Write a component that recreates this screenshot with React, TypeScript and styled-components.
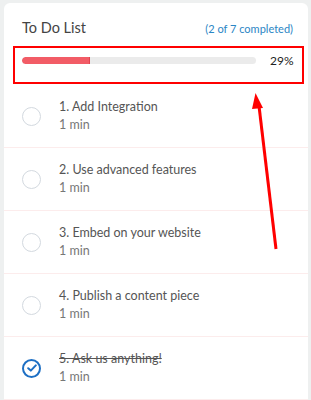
import React from 'react';
import styled, { createGlobalStyle } from 'styled-components';

const GlobalStyle = createGlobalStyle`
  html, body {
    margin: 0;
    padding: 0;
    background: #eef0f0;
    font-family: Lato, "Noto Sans", sans-serif;
  }
`;

const Page = styled.div`
  position: relative;
  width: 311px;
  height: 400px;
  overflow: hidden;
  padding: 3px 3px 0 4px;
  box-sizing: border-box;
`;

const Card = styled.div`
  background: #ffffff;
  border-radius: 6px 6px 0 0;
  min-height: 420px;
`;

const Header = styled.div`
  display: flex;
  justify-content: space-between;
  align-items: center;
  padding: 15px 15px 0 18px;
  height: 20px;
`;

const Title = styled.h2`
  margin: 0;
  font-size: 14.5px;
  font-weight: 400;
  color: #444;
  line-height: 20px;
`;

const Completed = styled.span`
  font-size: 11px;
  color: #2b86c5;
`;

const ProgressRow = styled.div`
  display: flex;
  align-items: center;
  gap: 14px;
  margin: 14px 15px 17px 18px;
  height: 16px;
`;

const Track = styled.div`
  flex: 0 0 234px;
  height: 7px;
  border-radius: 4px;
  background: #ebebeb;
  overflow: hidden;
`;

const Fill = styled.div`
  height: 100%;
  background: #f25c66;
  border-radius: 4px 0 0 4px;
  border-right: 1px solid #e04450;
  box-sizing: border-box;
`;

const Percent = styled.span`
  margin-left: auto;
  font-size: 12px;
  color: #222;
`;

const List = styled.ul`
  list-style: none;
  margin: 0;
  padding: 0;
`;

const Row = styled.li`
  display: flex;
  align-items: center;
  gap: 18px;
  height: 62px;
  padding-left: 18px;
  border-bottom: 1px solid #fcecec;
`;

const Circle = styled.span<{ $done?: boolean }>`
  flex: 0 0 auto;
  width: 19px;
  height: 19px;
  box-sizing: border-box;
  border-radius: 50%;
  border: ${({ $done }) => ($done ? '2px solid #1d6fc4' : '1.5px solid #d3d9df')};
  display: flex;
  align-items: center;
  justify-content: center;
`;

const Text = styled.div`
  display: flex;
  flex-direction: column;
`;

const ItemTitle = styled.span<{ $done?: boolean }>`
  font-size: 12.5px;
  line-height: 18px;
  color: #555;
  text-decoration: ${({ $done }) => ($done ? 'line-through' : 'none')};
`;

const ItemTime = styled.span`
  font-size: 12.5px;
  line-height: 18px;
  color: #777;
`;

const Annotation = styled.svg`
  position: absolute;
  left: 0;
  top: 0;
  pointer-events: none;
`;

const items = [
  { title: '1. Add Integration', done: false },
  { title: '2. Use advanced features', done: false },
  { title: '3. Embed on your website', done: false },
  { title: '4. Publish a content piece', done: false },
  { title: '5. Ask us anything!', done: true },
];

export default function App() {
  const pct = 29;
  return (
    <>
      <GlobalStyle />
      <Page>
        <Card>
          <Header>
            <Title>To Do List</Title>
            <Completed>(2 of 7 completed)</Completed>
          </Header>
          <ProgressRow>
            <Track>
              <Fill style={{ width: `${pct}%` }} />
            </Track>
            <Percent>{pct}%</Percent>
          </ProgressRow>
          <List>
            {items.map((it) => (
              <Row key={it.title}>
                <Circle $done={it.done}>
                  {it.done && (
                    <svg width="10" height="8" viewBox="0 0 10 8">
                      <path d="M1.2 4.2 L3.8 6.6 L8.8 1.4" fill="none" stroke="#1d6fc4" strokeWidth="2" strokeLinecap="round" strokeLinejoin="round" />
                    </svg>
                  )}
                </Circle>
                <Text>
                  <ItemTitle $done={it.done}>{it.title}</ItemTitle>
                  <ItemTime>1 min</ItemTime>
                </Text>
              </Row>
            ))}
          </List>
        </Card>
        <Annotation width="311" height="400" viewBox="0 0 311 400">
          <rect x="14" y="47" width="289" height="36" fill="none" stroke="#ff0000" strokeWidth="2" />
          <line x1="276" y1="249" x2="259" y2="106" stroke="#ff0000" strokeWidth="3" />
          <polygon points="255.5,93 252,109 263,108" fill="#ff0000" />
        </Annotation>
      </Page>
    </>
  );
}
